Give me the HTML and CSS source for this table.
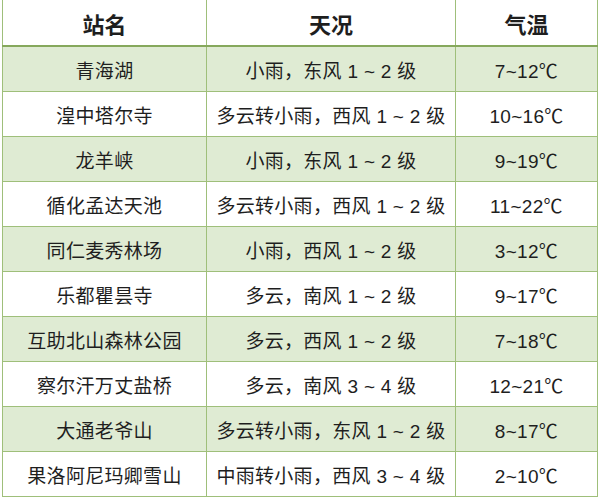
FILE: index.html
```html
<!DOCTYPE html>
<html lang="zh">
<head>
<meta charset="utf-8">
<link rel="stylesheet" href="styles.css">
</head>
<body>
<table class="weather">
  <thead>
    <tr><th class="c1">站名</th><th class="c2">天况</th><th class="c3">气温</th></tr>
  </thead>
  <tbody>
    <tr class="g"><td>青海湖</td><td>小雨，东风 1 ~ 2 级</td><td>7~12℃</td></tr>
    <tr><td>湟中塔尔寺</td><td>多云转小雨，西风 1 ~ 2 级</td><td>10~16℃</td></tr>
    <tr class="g"><td>龙羊峡</td><td>小雨，东风 1 ~ 2 级</td><td>9~19℃</td></tr>
    <tr><td>循化孟达天池</td><td>多云转小雨，西风 1 ~ 2 级</td><td>11~22℃</td></tr>
    <tr class="g"><td>同仁麦秀林场</td><td>小雨，西风 1 ~ 2 级</td><td>3~12℃</td></tr>
    <tr><td>乐都瞿昙寺</td><td>多云，南风 1 ~ 2 级</td><td>9~17℃</td></tr>
    <tr class="g"><td>互助北山森林公园</td><td>多云，西风 1 ~ 2 级</td><td>7~18℃</td></tr>
    <tr><td>察尔汗万丈盐桥</td><td>多云，南风 3 ~ 4 级</td><td>12~21℃</td></tr>
    <tr class="g"><td>大通老爷山</td><td>多云转小雨，东风 1 ~ 2 级</td><td>8~17℃</td></tr>
    <tr><td>果洛阿尼玛卿雪山</td><td>中雨转小雨，西风 3 ~ 4 级</td><td>2~10℃</td></tr>
  </tbody>
</table>
</body>
</html>
```
FILE: styles.css
```css
html, body {
  margin: 0;
  padding: 0;
  background: #ffffff;
}
body {
  padding: 0 0 0 2px;
}
.weather {
  border-collapse: collapse;
  table-layout: fixed;
  width: 596px;
  margin-top: -1px;
  font-family: "Liberation Sans", "Noto Sans CJK SC", sans-serif;
  color: #1e1e1e;
}
.weather th, .weather td {
  border: 1px solid #9fbf7a;
  text-align: center;
  padding: 0;
  white-space: nowrap;
}
.weather th {
  height: 45px;
  font-size: 22px;
  font-weight: bold;
  background: #ffffff;
  border-bottom: 2px solid #86a85c;
}
.weather td {
  height: 44px;
  font-size: 19px;
  letter-spacing: 0.3px;
}
.c1 { width: 203px; }
.c2 { width: 248px; }
.c3 { width: 141px; }
.weather tr.g td {
  background: #dfebd3;
}
```
